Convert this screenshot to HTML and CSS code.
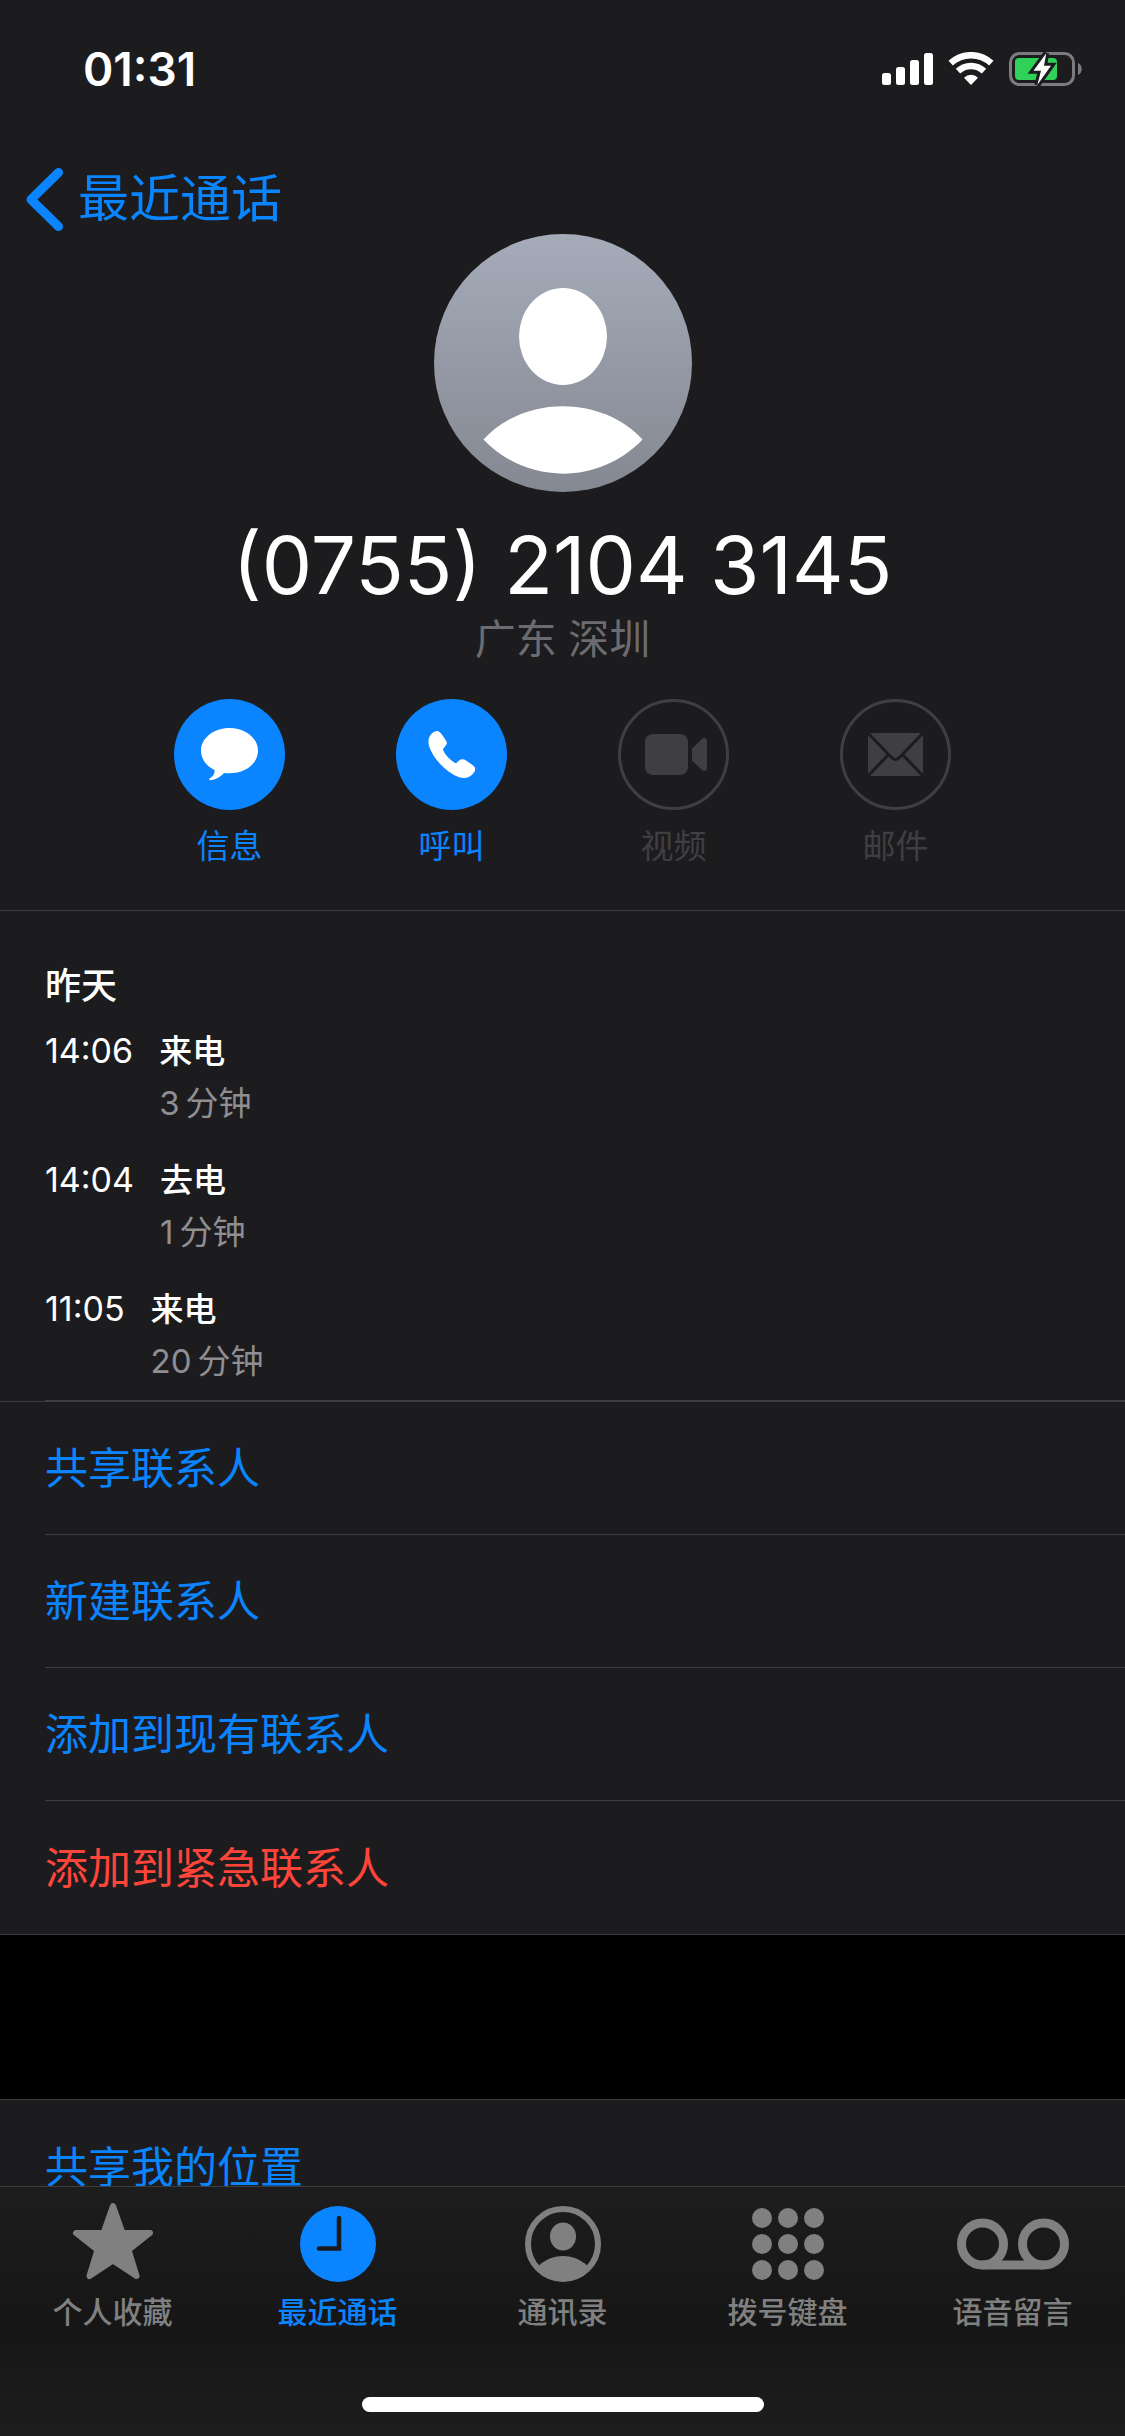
FILE: index.html
```html
<!DOCTYPE html>
<html lang="zh-CN">
<head>
<meta charset="utf-8">
<meta name="viewport" content="width=device-width">
<title>最近通话</title>
<link rel="stylesheet" href="styles.css">
</head>
<body>
<div class="screen">
  <header class="status">
    <time class="clock">01:31</time>
    <div class="indicators">
      <svg width="51" height="34" viewBox="0 0 51 34" fill="#fff"><rect y="21" width="9" height="12" rx="2.5"/><rect x="14" y="15" width="9" height="18" rx="2.5"/><rect x="28" y="8" width="9" height="25" rx="2.5"/><rect x="42" y="1" width="9" height="32" rx="2.5"/></svg>
      <svg width="46" height="34" viewBox="0 0 46 34"><g fill="none" stroke="#fff" stroke-width="6.500"><path d="M2.700 11.200A29.750 29.750 0 0 1 43.300 11.200"/><path d="M10 19.100A19 19 0 0 1 36 19.100"/></g><path d="M23 33L16 25.700A10 10 0 0 1 30 25.700Z" fill="#fff"/></svg>
      <svg width="74" height="34" viewBox="0 0 74 34"><rect x="1.500" y="1.500" width="63" height="31" rx="9" fill="none" stroke="#7c7c80" stroke-width="3"/><path d="M69 11c5 2 5 10 0 12z" fill="#7c7c80"/><rect x="6" y="6" width="42" height="22" rx="4" fill="#30d158"/><path d="M37.300 1.300L24.500 18.800H32L28.300 33L42 13.700H35Z" fill="#fff" stroke="#1c1c1e" stroke-width="6" paint-order="stroke"/></svg>
    </div>
  </header>

  <main class="content">
    <nav class="nav">
      <a class="back" href="#recents"><svg width="37" height="63" viewBox="0 0 37 63"><path d="M32.500 4.500L5 31.500L32.500 58.500" fill="none" stroke="currentColor" stroke-width="9" stroke-linecap="round" stroke-linejoin="round"/></svg>最近通话</a>
    </nav>

    <section class="profile">
      <svg class="avatar" viewBox="0 0 258 258"><defs><linearGradient id="shade" x2="0" y2="1"><stop stop-color="#a5abb9"/><stop offset="1" stop-color="#848892"/></linearGradient></defs><circle cx="129" cy="129" r="129" fill="url(#shade)"/><ellipse cx="129" cy="102.500" rx="44" ry="48.500" fill="#fff"/><path d="M49.500 205.500C90 161 168 161 208.500 205.500C165 251 93 251 49.500 205.500Z" fill="#fff"/></svg>
      <h1 class="number">(0755) 2104 3145</h1>
      <p class="place">广东 深圳</p>
      <div class="actions">
        <button class="action" type="button">
          <svg class="disc" viewBox="0 0 111 111"><circle cx="55.500" cy="55.500" r="55.500" fill="#0a84ff"/><path d="M55.500 29C40 29 27 39 27 51.500C27 60 32 67 40.500 71C41 75 38 78 35.500 79.500C34.500 81 36 81.500 38 81C43 80 47.500 77 50 74C72 76 84 64 84 51.500C84 39 71 29 55.500 29Z" fill="#fff"/></svg>
          信息
        </button>
        <button class="action" type="button">
          <svg class="disc" viewBox="0 0 111 111"><circle cx="55.500" cy="55.500" r="55.500" fill="#0a84ff"/><path d="M37 33.500C40 31 43 31.500 45.500 35L50 41.500C51.500 44 51 45.500 49 47.500L47 50C47 54 56 63 60 64.300L63 61.500C65.500 59.500 68 60 70 61.500L76.500 66C79.500 68 80 71 78 73.500C75 78 70 80 64 78.500C52 75 37 60 33 47C31.500 41 33 36.500 37 33.500Z" fill="#fff"/></svg>
          呼叫
        </button>
        <button class="action" type="button" disabled>
          <svg class="disc" viewBox="0 0 111 111"><circle cx="55.500" cy="55.500" r="54" fill="none" stroke="#3f3f43" stroke-width="3"/><rect x="27" y="35" width="43" height="41" rx="8" fill="#3f3f43"/><path d="M74 49.500L84 40C87 38 89 39 89 42V69C89 72 87 73 84 71L74 61.500Z" fill="#3f3f43"/></svg>
          视频
        </button>
        <button class="action" type="button" disabled>
          <svg class="disc" viewBox="0 0 111 111"><circle cx="55.500" cy="55.500" r="54" fill="none" stroke="#3f3f43" stroke-width="3"/><rect x="28" y="34" width="55" height="43" rx="2" fill="#3f3f43"/><path d="M28 34L51 58Q55.500 63 60 58L83 34M28 77L48 56M83 77L63 56" fill="none" stroke="#1c1c1e" stroke-width="3"/></svg>
          邮件
        </button>
      </div>
    </section>

    <section class="history">
      <h2 class="day">昨天</h2>
      <ul class="calls">
        <li class="call"><time>14:06</time><div><p class="kind">来电</p><p class="length">3&thinsp;分钟</p></div></li>
        <li class="call"><time>14:04</time><div><p class="kind">去电</p><p class="length">1&thinsp;分钟</p></div></li>
        <li class="call"><time>11:05</time><div><p class="kind">来电</p><p class="length">20&thinsp;分钟</p></div></li>
      </ul>
    </section>

    <section class="options">
      <button class="option" type="button">共享联系人</button>
      <button class="option" type="button">新建联系人</button>
      <button class="option" type="button">添加到现有联系人</button>
      <button class="option urgent" type="button">添加到紧急联系人</button>
    </section>

    <section class="options sharing">
      <button class="option" type="button">共享我的位置</button>
    </section>
  </main>

  <footer class="dock">
    <nav class="tabs">
      <a class="tab" href="#favorites"><svg width="84" height="80" viewBox="0 1 84 80"><path d="M42 5L51.500 32H79L57.500 49L65.500 75L42 59.500L18.500 75L26.500 49L5 32H32.500Z" fill="currentColor" stroke="currentColor" stroke-width="6" stroke-linejoin="round"/></svg>个人收藏</a>
      <a class="tab current" href="#recents"><svg width="76" height="80" viewBox="0 0 76 80"><circle cx="38" cy="42" r="38" fill="currentColor"/><path d="M39 16V46.500H19" fill="none" stroke="#1a1a1b" stroke-width="4.500" stroke-linecap="round"/></svg>最近通话</a>
      <a class="tab" href="#contacts"><svg width="76" height="80" viewBox="0 0 76 80"><defs><clipPath id="ring"><circle cx="38" cy="42" r="36"/></clipPath></defs><circle cx="38" cy="42" r="35" fill="none" stroke="currentColor" stroke-width="6"/><ellipse cx="38" cy="34.500" rx="13" ry="14" fill="currentColor"/><ellipse cx="38" cy="80" rx="31" ry="26" fill="currentColor" clip-path="url(#ring)"/></svg>通讯录</a>
      <a class="tab" href="#keypad"><svg width="74" height="80" viewBox="0 0 74 80" fill="currentColor"><circle cx="11" cy="16" r="10"/><circle cx="37" cy="16" r="10"/><circle cx="63" cy="16" r="10"/><circle cx="11" cy="42" r="10"/><circle cx="37" cy="42" r="10"/><circle cx="63" cy="42" r="10"/><circle cx="11" cy="68" r="10"/><circle cx="37" cy="68" r="10"/><circle cx="63" cy="68" r="10"/></svg>拨号键盘</a>
      <a class="tab" href="#voicemail"><svg width="112" height="80" viewBox="0 0 112 80"><g fill="none" stroke="currentColor" stroke-width="9"><circle cx="25.500" cy="42" r="21"/><circle cx="86.500" cy="42" r="21"/><path d="M25.500 63H86.500"/></g></svg>语音留言</a>
    </nav>
    <div class="home"></div>
  </footer>
</div>
</body>
</html>
```
FILE: styles.css
```css
* { box-sizing: border-box; }
body, h1, h2, p, ul { margin: 0; padding: 0; }
body {
  background: #000;
  color: #fff;
  font-family: Inter, "Noto Sans CJK SC", sans-serif;
  font-size: 33px;
  line-height: 52px;
}
a { color: inherit; text-decoration: none; }
button {
  border: 0;
  padding: 0;
  background: none;
  color: inherit;
  font: inherit;
}
svg { display: block; flex: none; }

.screen {
  display: flex;
  flex-direction: column;
  height: 100vh;
}

/* Status bar */
.status {
  display: flex;
  justify-content: space-between;
  align-items: center;
  padding: 39px 42px 39px 83px;
  background: #1c1c1e;
}
.clock { font-size: 46px; line-height: 60px; font-weight: 600; }
.indicators { display: flex; gap: 15px; }

/* Scrolling content */
.content {
  flex: 1;
  min-height: 0;
  overflow-y: auto;
  scrollbar-width: none;
}
.nav {
  display: flex;
  padding: 29px 26px 3px;
  background: #1c1c1e;
}
.back {
  display: flex;
  align-items: center;
  gap: 15px;
  color: #0a84ff;
  font-size: 51px;
  line-height: 64px;
}
.profile {
  display: flex;
  flex-direction: column;
  align-items: center;
  padding-bottom: 38px;
  background: #1c1c1e;
  border-bottom: 1px solid #3d3d41;
}
.avatar { width: 258px; height: 258px; }
.number {
  margin-top: 25px;
  font-size: 80px;
  line-height: 96px;
  font-weight: 400;
}
.place { font-size: 41px; color: #6c6c70; }
.actions {
  display: flex;
  gap: 111px;
  margin-top: 34px;
}
.action {
  display: flex;
  flex-direction: column;
  align-items: center;
  gap: 10px;
  width: 111px;
  color: #0a84ff;
}
.action:disabled { color: #3f3f43; }
.disc { width: 111px; height: 111px; }

/* Call history */
.history {
  padding: 49px 0 0 45px;
  background: #1c1c1e;
}
.day { font-size: 36px; font-weight: 500; }
.calls {
  margin-top: 13px;
  padding-bottom: 13px;
  border-bottom: 1px solid #3d3d41;
  list-style: none;
}
.call {
  display: flex;
  gap: 26px;
  padding-bottom: 25px;
}
.call time { font-size: 34px; }
.call:last-child { padding-bottom: 0; }
.kind { font-weight: 500; }
.length { color: #8e8e93; }

/* Option rows */
.options {
  display: flex;
  flex-direction: column;
  padding-left: 45px;
  background: #1c1c1e;
  border: solid #3d3d41;
  border-width: 1px 0;
}
.option {
  height: 133px;
  border-bottom: 1px solid #3d3d41;
  color: #0a84ff;
  font-size: 43px;
  text-align: left;
}
.option:last-child { border-bottom: 0; }
.urgent { color: #ff453a; }
.sharing { margin-top: 164px; }

/* Tab bar */
.dock {
  padding: 15px 0 24px;
  border-top: 1px solid #3d3d41;
  background: linear-gradient(#1d1d1e, #161616 55%, #1d1d1e);
}
.tabs { display: grid; grid-template-columns: repeat(5, 1fr); }
.tab {
  display: flex;
  flex-direction: column;
  align-items: center;
  gap: 8px;
  color: #808080;
  font-size: 30px;
  line-height: 44px;
  font-weight: 500;
}
.current { color: #0a84ff; }
.home {
  width: 402px;
  height: 15px;
  margin: 63px auto 0;
  border-radius: 8px;
  background: #fff;
}
```
